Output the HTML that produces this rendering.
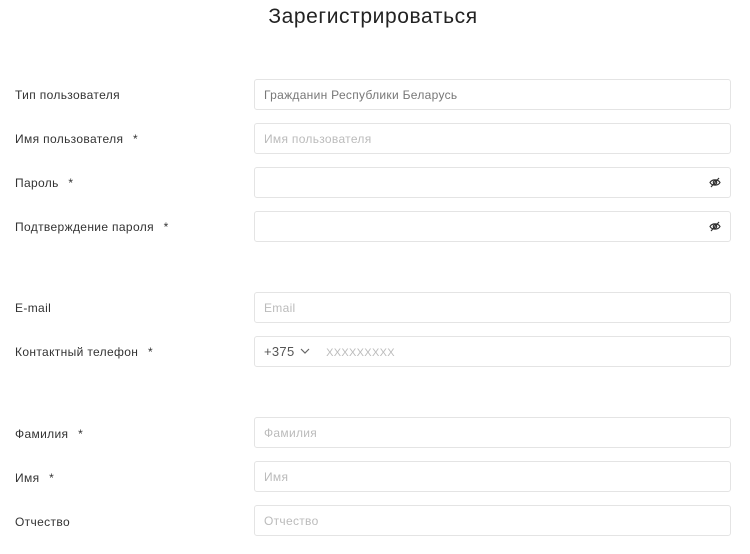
<!DOCTYPE html>
<html><head><meta charset="utf-8"><style>
body{margin:0;width:750px;height:554px;background:#fff;font-family:"Liberation Sans",sans-serif;position:relative;overflow:hidden}
.t{position:absolute;left:0;width:746px;top:5px;text-align:center;font-size:21px;letter-spacing:0.6px;color:#222}
.l{position:absolute;left:15px;font-size:12px;color:#333;line-height:14px;letter-spacing:0.35px}
.l b{font-weight:normal;margin-left:6px}
.i{position:absolute;left:254px;width:477px;height:31px;border:1px solid #e4e4e4;border-radius:3px;box-sizing:border-box;font-size:12px;color:#bbb;padding-left:9px;line-height:30px;letter-spacing:0.3px}
.eye{position:absolute;right:9px;top:9px}
</style></head><body>
<div class="t">Зарегистрироваться</div>
<div class="l" style="top:88px">Тип пользователя</div>
<div class="i" style="top:79px;color:#777">Гражданин Республики Беларусь</div>
<div class="l" style="top:132px">Имя пользователя <b>*</b></div>
<div class="i" style="top:123px">Имя пользователя</div>
<div class="l" style="top:176px">Пароль <b>*</b></div>
<div class="i" style="top:167px"><svg class="eye" width="12" height="11" viewBox="0 0 12 11"><path d="M1 5.5C3 2 9 2 11 5.5C9 9 3 9 1 5.5Z" fill="none" stroke="#333" stroke-width="1.2"/><circle cx="6" cy="5.5" r="1.7" fill="none" stroke="#333" stroke-width="1.2"/><path d="M2 10L10 1" stroke="#333" stroke-width="1.2"/></svg></div>
<div class="l" style="top:220px">Подтверждение пароля <b>*</b></div>
<div class="i" style="top:211px"><svg class="eye" width="12" height="11" viewBox="0 0 12 11"><path d="M1 5.5C3 2 9 2 11 5.5C9 9 3 9 1 5.5Z" fill="none" stroke="#333" stroke-width="1.2"/><circle cx="6" cy="5.5" r="1.7" fill="none" stroke="#333" stroke-width="1.2"/><path d="M2 10L10 1" stroke="#333" stroke-width="1.2"/></svg></div>
<div class="l" style="top:301px">E-mail</div>
<div class="i" style="top:292px">Email</div>
<div class="l" style="top:345px">Контактный телефон <b>*</b></div>
<div class="i" style="top:336px"><span style="color:#555;font-size:13px">+375</span> <svg width="10" height="7" viewBox="0 0 10 7" style="margin:0 4px 1px 2px"><path d="M1 1L5 5L9 1" fill="none" stroke="#666" stroke-width="1.2"/></svg><span style="margin-left:12px;font-size:11px">XXXXXXXXX</span></div>
<div class="l" style="top:427px">Фамилия <b>*</b></div>
<div class="i" style="top:417px">Фамилия</div>
<div class="l" style="top:471px">Имя <b>*</b></div>
<div class="i" style="top:461px">Имя</div>
<div class="l" style="top:515px">Отчество</div>
<div class="i" style="top:505px">Отчество</div>
</body></html>
